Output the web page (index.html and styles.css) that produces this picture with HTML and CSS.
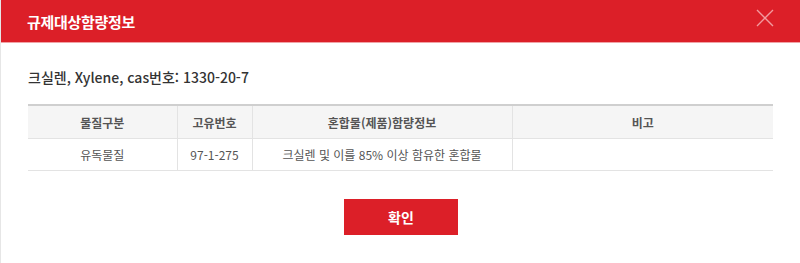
FILE: index.html
```html
<!DOCTYPE html>
<html lang="ko">
<head>
    <meta charset="UTF-8">
    <meta name="viewport" content="width=device-width, initial-scale=1.0">
    <title>규제대상함량정보</title>
    <link rel="stylesheet" href="styles.css">
</head>
<body>
    <div class="modal">
        <div class="modal-head">
            <h1>규제대상함량정보</h1>
            <button class="close" type="button" aria-label="닫기">
                <svg width="18" height="18" viewBox="0 0 18 18">
                    <path d="M1 1L17 17M17 1L1 17" stroke="#f29a9e" stroke-width="1.4" fill="none"/>
                </svg>
            </button>
        </div>
        <div class="modal-body">
            <p class="subject">크실렌, Xylene, cas번호: 1330-20-7</p>
            <table class="info">
                <colgroup>
                    <col style="width:149px">
                    <col style="width:75px">
                    <col style="width:260px">
                    <col>
                </colgroup>
                <thead>
                    <tr>
                        <th>물질구분</th>
                        <th>고유번호</th>
                        <th>혼합물(제품)함량정보</th>
                        <th>비고</th>
                    </tr>
                </thead>
                <tbody>
                    <tr>
                        <td>유독물질</td>
                        <td>97-1-275</td>
                        <td>크실렌 및 이를 85% 이상 함유한 혼합물</td>
                        <td></td>
                    </tr>
                </tbody>
            </table>
            <div class="btns">
                <button class="btn-ok" type="button">확인</button>
            </div>
        </div>
    </div>
</body>
</html>
```

FILE: styles.css
```css
html, body {
    margin: 0;
    padding: 0;
    background: #fff;
}
body {
    font-family: "Noto Sans CJK KR", "Noto Sans", sans-serif;
    color: #333;
}
.modal {
    height: 263px;
    border-left: 1px solid #e6e6e6;
    box-sizing: border-box;
}
.modal-head {
    display: flex;
    align-items: center;
    justify-content: space-between;
    height: 42px;
    padding: 0 26px 0 26px;
    background: #dc1f28;
    border-bottom: 1px solid #f0a3a6;
}
.modal-head h1 {
    margin: 0;
    font-size: 15px;
    font-weight: bold;
    color: #fff;
    letter-spacing: -0.3px;
}
.close {
    display: flex;
    padding: 0;
    margin-top: -6px;
    border: 0;
    background: none;
}
.modal-body {
    padding: 24px 26px 0 27px;
}
.subject {
    margin: 0 0 17px;
    font-size: 14px;
    font-weight: 500;
    line-height: 20px;
    color: #333;
}
.info {
    width: 745px;
    border-collapse: collapse;
    table-layout: fixed;
    font-size: 12px;
    color: #555;
}
.info th, .info td {
    padding: 0;
    text-align: center;
    border-left: 1px solid #e3e3e3;
    border-bottom: 1px solid #e3e3e3;
}
.info th:first-child, .info td:first-child {
    border-left: 0;
}
.info th {
    height: 32px;
    font-weight: bold;
    background: #f5f5f5;
    border-top: 2px solid #cfcfcf;
}
.info td {
    height: 31px;
}
.btns {
    display: flex;
    justify-content: center;
    padding-top: 28px;
}
.btn-ok {
    width: 114px;
    height: 36px;
    border: 0;
    background: #dc1f28;
    color: #fff;
    font-family: inherit;
    font-size: 14px;
    font-weight: bold;
}
```
